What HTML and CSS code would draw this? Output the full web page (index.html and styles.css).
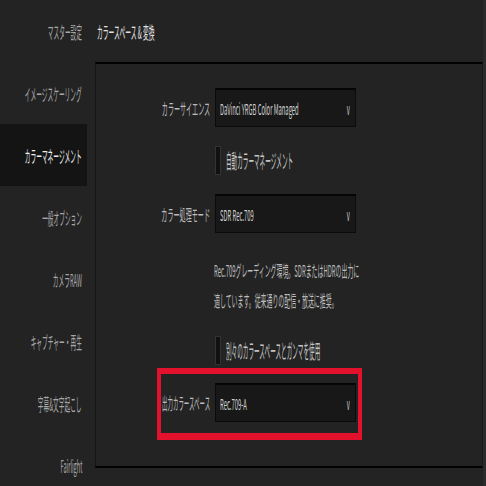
FILE: index.html
```html
<!DOCTYPE html>
<html lang="ja">
<head>
    <meta charset="UTF-8">
    <meta name="viewport" content="width=device-width, initial-scale=1.0">
    <title>プロジェクト設定</title>
    <link rel="stylesheet" href="styles.css">
</head>
<body>
    <div class="app">
        <nav class="sidebar">
            <div class="nav-item"><span class="sq">マスター設定</span></div>
            <div class="nav-item"><span class="sq">イメージスケーリング</span></div>
            <div class="nav-item active"><span class="sq">カラーマネージメント</span></div>
            <div class="nav-item"><span class="sq">一般オプション</span></div>
            <div class="nav-item"><span class="sq">カメラRAW</span></div>
            <div class="nav-item"><span class="sq">キャプチャー・再生</span></div>
            <div class="nav-item"><span class="sq">字幕&amp;文字起こし</span></div>
            <div class="nav-item"><span class="sq">Fairlight</span></div>
        </nav>

        <main class="main">
            <div class="page-title"><span class="sq">カラースペース &amp; 変換</span></div>

            <section class="panel">
                <div class="form">
                    <div class="row">
                        <div class="label"><span class="sq">カラーサイエンス</span></div>
                        <div class="combo">
                            <div class="value"><span class="sq">DaVinci YRGB Color Managed</span></div>
                            <span class="sq caret">v</span>
                        </div>
                    </div>

                    <div class="check-row first-check">
                        <span class="check"></span>
                        <div class="check-label"><span class="sq">自動カラーマネージメント</span></div>
                    </div>

                    <div class="row mode-row">
                        <div class="label"><span class="sq">カラー処理モード</span></div>
                        <div class="combo">
                            <div class="value"><span class="sq">SDR Rec.709</span></div>
                            <span class="sq caret">v</span>
                        </div>
                    </div>

                    <div class="desc">
                        <div class="desc-line"><span class="sq">Rec.709グレーディング環境。SDRまたはHDRの出力に</span></div>
                        <div class="desc-line"><span class="sq">適しています。従来通りの配信・放送に推奨。</span></div>
                    </div>

                    <div class="check-row second-check">
                        <span class="check"></span>
                        <div class="check-label"><span class="sq">別々のカラースペースとガンマを使用</span></div>
                    </div>

                    <div class="highlight">
                        <div class="row">
                            <div class="label"><span class="sq">出力カラースペース</span></div>
                            <div class="combo">
                                <div class="value"><span class="sq">Rec.709-A</span></div>
                                <span class="sq caret">v</span>
                            </div>
                        </div>
                    </div>
                </div>
            </section>
        </main>

        <div class="edge"></div>
    </div>
</body>
</html>
```

FILE: styles.css
```css
* {
    margin: 0;
    padding: 0;
    box-sizing: border-box;
}

body {
    width: 486px;
    height: 486px;
    overflow: hidden;
    background: #232323;
    color: #b4b4b4;
    font-family: "Noto Sans CJK JP", "Noto Sans", sans-serif;
    font-size: 15px;
}

/* the UI font is very narrow, so every text run is squeezed */
.sq {
    display: inline-block;
    white-space: nowrap;
    transform: scaleX(var(--sx, 0.4));
    transform-origin: left center;
}

.app {
    display: flex;
    height: 486px;
}

.sidebar {
    width: 87px;
    flex-shrink: 0;
}

.nav-item {
    height: 62px;
    display: flex;
    align-items: center;
    justify-content: flex-end;
    overflow: hidden;
    padding-right: 5px;
    color: #a8a8a8;
    font-size: 17px;
    --sx: 0.335;
}

.nav-item .sq {
    transform-origin: right center;
}

.nav-item.active {
    background: #141414;
    color: #ededed;
}

.main {
    width: 396px;
    flex-shrink: 0;
    display: flex;
    flex-direction: column;
}

.page-title {
    height: 62px;
    display: flex;
    align-items: center;
    overflow: hidden;
    padding-left: 10px;
    color: #e4e4e4;
    font-size: 17px;
    --sx: 0.34;
}

.panel {
    margin-left: 8px;
    height: 406px;
    overflow: hidden;
    border-top: 2px solid #020202;
    border-bottom: 2px solid #020202;
    border-left: 1px solid #151515;
    border-right: 1px solid #1a1a1a;
}

.form {
    padding: 24px 0 0 4px;
}

.row {
    display: flex;
    align-items: center;
    gap: 5px;
}

.label {
    width: 110px;
    display: flex;
    justify-content: flex-end;
    color: #bcbcbc;
    font-size: 16px;
    --sx: 0.38;
}

.label .sq {
    transform-origin: right center;
}

.combo {
    width: 141px;
    height: 39px;
    display: flex;
    align-items: center;
    padding: 0 5px 0 4px;
    background: #181818;
    border: 1px solid #0b0b0b;
    border-top: 2px solid #050505;
    color: #d2d2d2;
    font-size: 15px;
    --sx: 0.39;
}

.value {
    flex: 1;
    min-width: 0;
    overflow: hidden;
}

.caret {
    transform-origin: right center;
    color: #cfcfcf;
}

.check-row {
    display: flex;
    align-items: center;
    gap: 5px;
    padding-left: 115px;
    color: #c4c4c4;
}

.check {
    width: 6px;
    height: 29px;
    flex-shrink: 0;
    background: #111;
    border: 1px solid #333;
}

.check-label {
    flex: 1;
    min-width: 0;
    overflow: hidden;
    font-size: 20px;
    --sx: 0.28;
}

.first-check {
    margin-top: 19px;
}

.mode-row {
    margin-top: 19px;
}

.desc {
    margin-top: 22px;
    padding-left: 114px;
    color: #bdbdbd;
    font-size: 16px;
    --sx: 0.37;
}

.desc-line {
    height: 30px;
    line-height: 30px;
    overflow: hidden;
}

.second-check {
    margin-top: 21px;
}

.highlight {
    margin: 3px 0 0 57px;
    width: 205px;
    border: 4px solid #e3112c;
    border-top-width: 6px;
    border-bottom-width: 7px;
    padding: 9px 0 11px;
}

.highlight .label {
    width: 49px;
    font-size: 17px;
    --sx: 0.32;
}

.edge {
    width: 3px;
    background: #2b2b2b;
}
```
